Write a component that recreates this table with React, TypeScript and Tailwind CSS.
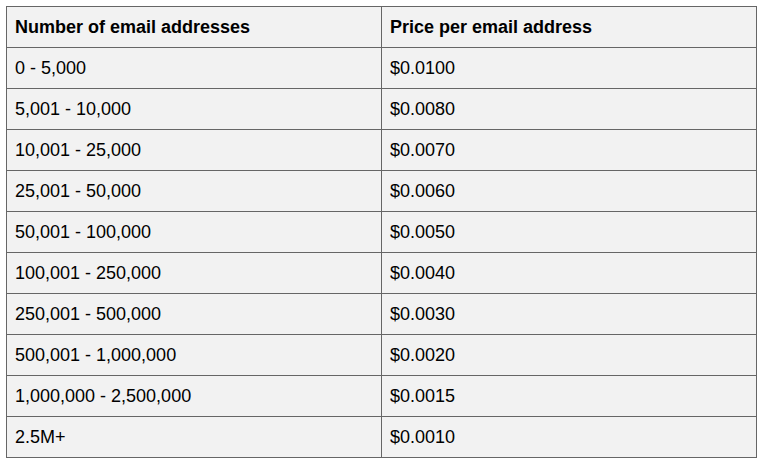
const rows: [string, string][] = [
  ["0 - 5,000", "$0.0100"],
  ["5,001 - 10,000", "$0.0080"],
  ["10,001 - 25,000", "$0.0070"],
  ["25,001 - 50,000", "$0.0060"],
  ["50,001 - 100,000", "$0.0050"],
  ["100,001 - 250,000", "$0.0040"],
  ["250,001 - 500,000", "$0.0030"],
  ["500,001 - 1,000,000", "$0.0020"],
  ["1,000,000 - 2,500,000", "$0.0015"],
  ["2.5M+", "$0.0010"],
];

function App() {
  return (
    <div className="w-full min-h-screen bg-white p-[6px] font-['Liberation_Sans',Arial,sans-serif] text-[18px] leading-[22px] text-black">
      <table className="w-[751px] border-collapse bg-[#f2f2f2] table-fixed">
        <thead>
          <tr>
            <th className="w-1/2 h-[41px] border border-[#666666] px-[8px] text-left font-bold">
              Number of email addresses
            </th>
            <th className="w-1/2 h-[41px] border border-[#666666] px-[8px] text-left font-bold">
              Price per email address
            </th>
          </tr>
        </thead>
        <tbody>
          {rows.map(([range, price]) => (
            <tr key={range}>
              <td className="h-[41px] border border-[#666666] px-[8px]">{range}</td>
              <td className="h-[41px] border border-[#666666] px-[8px]">{price}</td>
            </tr>
          ))}
        </tbody>
      </table>
    </div>
  );
}

export default App;
